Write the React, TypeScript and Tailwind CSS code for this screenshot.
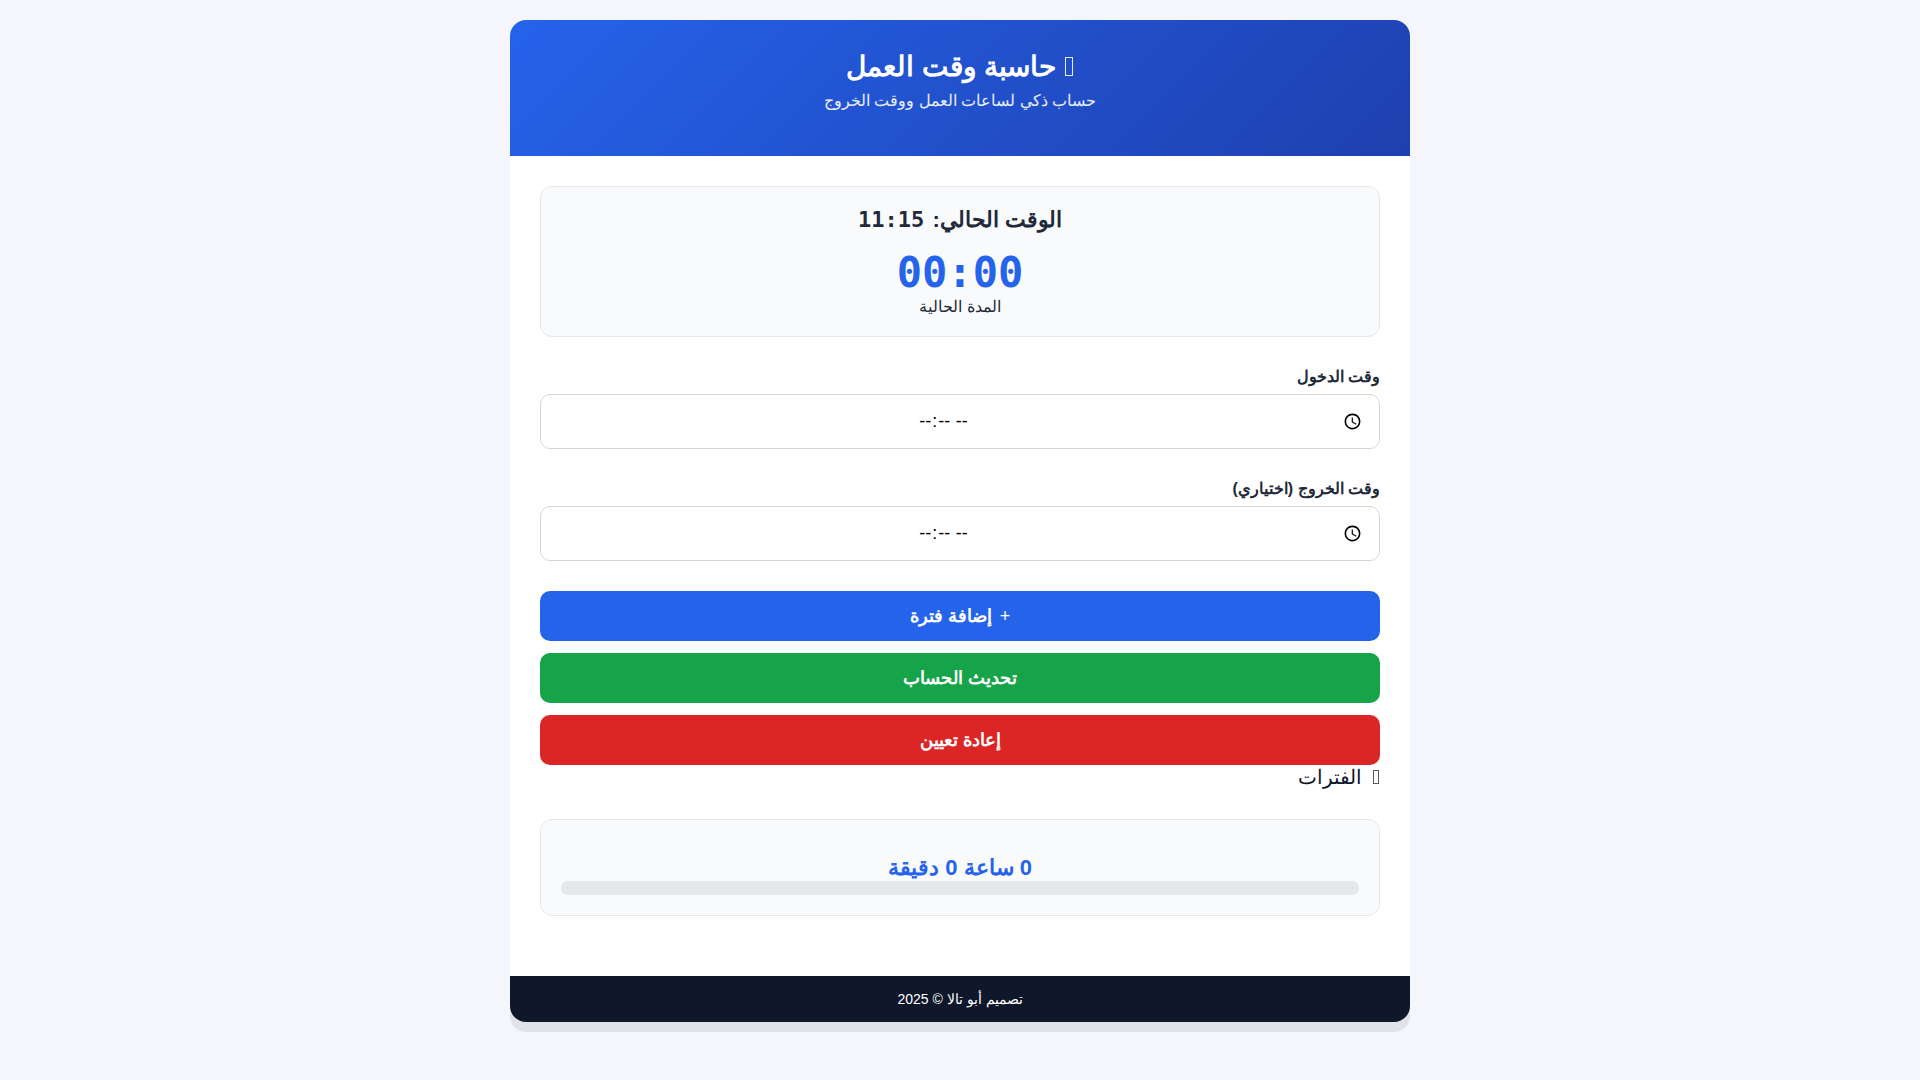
import type { ReactNode } from 'react';

function TimeField({ id, label }: { id: string; label: string }) {
  return (
    <div className="mb-[30px]">
      <label htmlFor={id} className="mb-2 block text-base leading-[19px] font-bold text-gray-800">
        {label}
      </label>
      <input
        id={id}
        type="time"
        className="h-[55px] w-full rounded-[10px] border border-gray-300 bg-white px-3.5 text-center text-lg leading-[21px] text-black [&::-webkit-datetime-edit]:block"
      />
    </div>
  );
}

function ActionButton({ color, children }: { color: string; children: ReactNode }) {
  return (
    <button
      type="button"
      className={`flex h-[50px] w-full items-center justify-center gap-2 rounded-[10px] text-lg font-bold text-white ${color}`}
    >
      {children}
    </button>
  );
}

export default function App() {
  return (
    <div
      dir="rtl"
      lang="ar"
      className="min-h-screen bg-[#f4f6fb] p-5 font-['Liberation_Sans',sans-serif] text-gray-800"
    >
      <div className="mx-auto max-w-[900px] overflow-hidden rounded-2xl bg-white shadow-[0_10px_0_rgba(0,0,0,0.08)]">
        <header className="bg-linear-135 from-[#2563eb] to-[#1e40af] px-5 pt-[30px] pb-[42px] text-center text-white">
          <h1 className="text-[28px] leading-[34px] font-bold">
            <span aria-hidden="true" className="mx-px inline-block h-[19px] w-2 border border-white/90" /> حاسبة وقت
            العمل
          </h1>
          <p className="mt-1 text-base leading-[26px] text-white/90">حساب ذكي لساعات العمل ووقت الخروج</p>
        </header>

        <main className="p-[30px] pb-[60px]">
          <section className="mb-[30px] rounded-xl border border-gray-200 bg-[#f9fafc] p-5 text-center">
            <div className="text-[22px] leading-[26px] font-bold">
              الوقت الحالي: <span className="ms-0.5 font-['DejaVu_Sans_Mono',monospace]">11:15</span>
            </div>
            <div className="mt-[15px] font-['DejaVu_Sans_Mono',monospace] text-[42px] leading-[49px] font-bold text-[#2563eb]">
              00:00
            </div>
            <div className="text-base leading-[19px]">المدة الحالية</div>
          </section>

          <TimeField id="time-in" label="وقت الدخول" />
          <TimeField id="time-out" label="وقت الخروج (اختياري)" />

          <div className="flex flex-col gap-3">
            <ActionButton color="bg-[#2563eb]">
              <span aria-hidden="true" className="font-normal">
                +
              </span>
              إضافة فترة
            </ActionButton>
            <ActionButton color="bg-[#16a34a]">تحديث الحساب</ActionButton>
            <ActionButton color="bg-[#dc2626]">إعادة تعيين</ActionButton>
          </div>

          <h2 className="mb-[30px] flex items-baseline gap-2.5 text-xl leading-6 text-[#0f172a]">
            <span aria-hidden="true" className="mx-px h-3.5 w-1.5 border border-[#0f172a]/70" />
            الفترات
          </h2>

          <section className="rounded-xl border border-gray-200 bg-[#f9fafc] p-5 pt-[35px] text-center">
            <div className="text-[22px] leading-[26px] font-bold text-[#2563eb]">0 ساعة 0 دقيقة</div>
            <div
              role="progressbar"
              aria-label="التقدم"
              aria-valuenow={0}
              className="h-3.5 rounded-lg bg-gray-200"
            />
          </section>
        </main>

        <footer className="bg-[#0f172a] py-[15px] text-center text-sm leading-4 text-white">
          تصميم أبو تالا © 2025
        </footer>
      </div>
    </div>
  );
}
